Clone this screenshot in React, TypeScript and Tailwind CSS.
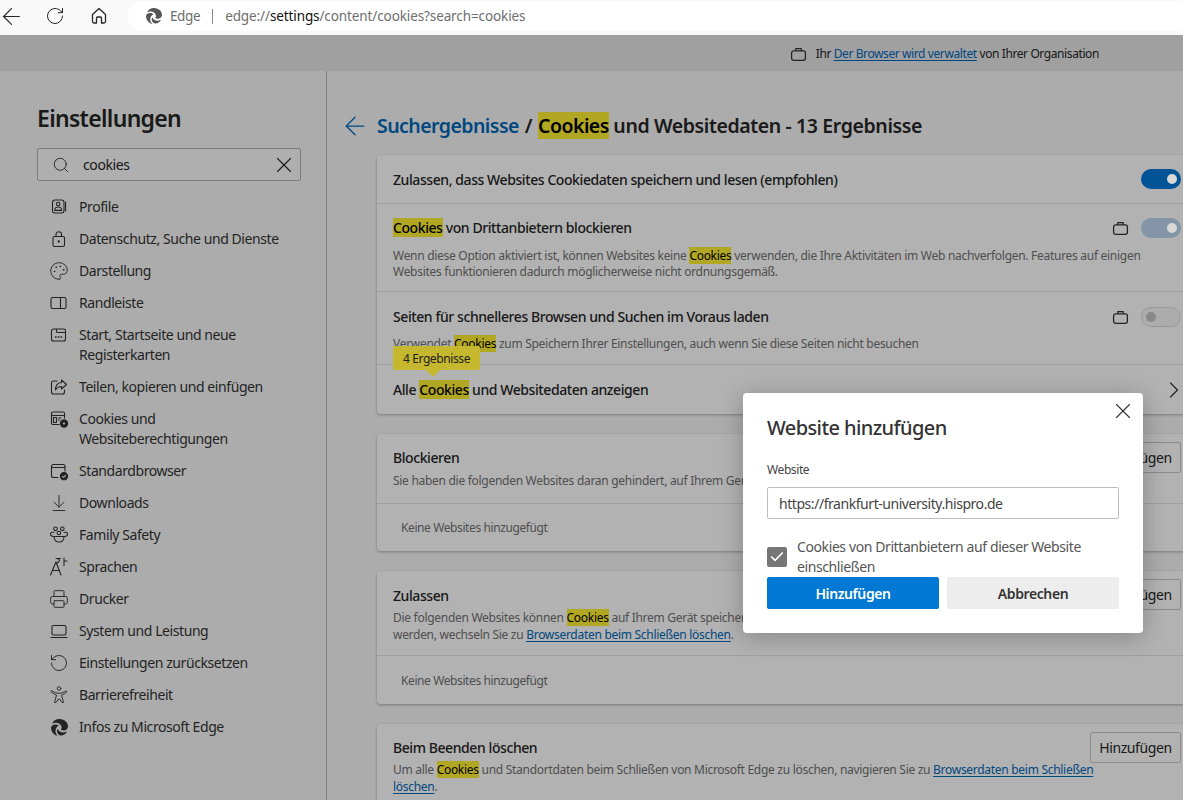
import React from "react";
import { ArrowLeft, RotateCw, Search, X, ChevronRight, Check, Palette, Printer, RotateCcw, ArrowDownToLine } from "lucide-react";
import { FaEdge } from "react-icons/fa6";

const S = ({ children, className = "" }: { children: React.ReactNode; className?: string }) => (
  <svg viewBox="0 0 20 20" fill="none" stroke="currentColor" strokeWidth="1.1" strokeLinecap="round" strokeLinejoin="round" className={className || "w-5 h-5 shrink-0"}>
    {children}
  </svg>
);

const Brief = () => (
  <svg viewBox="0 0 16 16" fill="none" stroke="#333" strokeWidth="1.2" className="w-[17px] h-[17px] shrink-0">
    <rect x="1.5" y="4.5" width="13" height="9" rx="2" />
    <path d="M5.5 4.500v-2h5v2" />
  </svg>
);

const ProfileIcon = () => (
  <S>
    <rect x="3.500" y="3" width="11.500" height="13" rx="2.500" />
    <path d="M16.600 5v9" />
    <circle cx="9.200" cy="7" r="1.800" />
    <path d="M5.800 13c0-2 1.500-3 3.400-3s3.400 1 3.400 3v.4H5.800z" />
  </S>
);
const LockIcon = () => (
  <S>
    <rect x="4" y="7.500" width="11.500" height="10" rx="1.500" />
    <path d="M7 7.500V5.500a2.750 2.750 0 0 1 5.500 0v2" />
    <circle cx="9.750" cy="12.500" r=".6" fill="currentColor" />
  </S>
);
const PanelIcon = () => (
  <S>
    <rect x="2" y="4.500" width="15" height="11" rx="1.500" />
    <path d="M11.500 4.500v11" />
  </S>
);
const StartIcon = () => (
  <S>
    <path d="M4.500 4h3v2.500a1 1 0 0 0 1 1h8v6.500a2 2 0 0 1-2 2H4.500a2 2 0 0 1-2-2V6a2 2 0 0 1 2-2zM8 4h7a1.500 1.500 0 0 1 1.500 1.500v2" />
    <path d="M6.500 12h.6M9.300 12h.6M12.100 12h.6" strokeWidth="1.500" />
  </S>
);
const ShareIcon = () => (
  <S>
    <path d="M8 4H4.500a2 2 0 0 0-2 2v9a2 2 0 0 0 2 2h9a2 2 0 0 0 2-2v-2" />
    <path d="M12.500 3l5 4.500-5 4.500V9.500c-3 0-4.800 1.300-6 3.500 0-4 2-7.200 6-7.500z" />
  </S>
);
const CookieIcon = () => (
  <S>
    <path d="M10 15.500H4a1.500 1.500 0 0 1-1.500-1.500V4.500A1.500 1.500 0 0 1 4 3h10a1.500 1.500 0 0 1 1.500 1.500V9" />
    <path d="M2.500 6.500h13" />
    <rect x="4.500" y="8.500" width="3" height="5" />
    <path d="M9.500 9h2.500M9.500 11h1" />
    <circle cx="15" cy="14.500" r="3.600" fill="#333" stroke="#333" />
    <circle cx="15" cy="14.500" r="1.100" fill="#f7f7f7" stroke="none" />
  </S>
);
const BrowserIcon = () => (
  <S>
    <path d="M9 16.500H4.500a2 2 0 0 1-2-2v-9a2 2 0 0 1 2-2h9.500a2 2 0 0 1 2 2V10" />
    <path d="M2.500 6.500h13.500" />
    <circle cx="15" cy="15.200" r="3.600" fill="#333" stroke="#333" />
    <path d="M13.500 15.300l1.100 1.100 2-2.100" stroke="#f7f7f7" />
  </S>
);
const FamilyIcon = () => (
  <S>
    <circle cx="6.500" cy="3.800" r="1.800" />
    <circle cx="13.300" cy="3.800" r="1.800" />
    <circle cx="9.900" cy="8" r="1.800" />
    <path d="M5 7.300H3.500C2.200 7.300 1.500 8 1.500 9c0 1.500 1.200 2.500 3 2.500M15 7.300h1.500c1.300 0 2 .7 2 1.700 0 1.500-1.200 2.500-3 2.500" />
    <path d="M5 11.500h10c0 3.500-2 5.500-5 5.500s-5-2-5-5.500z" />
  </S>
);
const LangIcon = () => (
  <S>
    <path d="M1.500 18L7 5l5 13M3.400 13.500h7.200" />
    <path d="M7 1.500h4.500M8 1.500c1 .2 2.300.5 2.300 2 0 1.200-1 2-2.300 2.500M15 1v7.500M15 4h3" />
  </S>
);
const LaptopIcon = () => (
  <S>
    <rect x="3" y="4.500" width="14" height="9.500" rx="1.500" />
    <path d="M2 16.500h16" />
  </S>
);
const AccessIcon = () => (
  <S className="w-5 h-5 shrink-0 [stroke-width:0.9]">
    <circle cx="10" cy="3.500" r="1.800" />
    <path d="M3 5.800c2 1.500 4.500 2.500 7 2.500s5-1 7-2.500l.8 1.200c-1.800 1.500-3.500 2.500-5.300 3l2 7.500h-1.500L10.500 14h-1l-2.500 3.500H5.500l2-7.500C5.700 9.500 4 8.500 2.200 7z" />
  </S>
);
const HomeIcon = () => (
  <svg viewBox="0 0 20 20" fill="none" stroke="#262626" strokeWidth="1.300" strokeLinejoin="round" className="w-5 h-5">
    <path d="M3.500 8.500L10 2.500l6.500 6v7a1.500 1.500 0 0 1-1.500 1.500h-2.500v-5a1 1 0 0 0-1-1h-3a1 1 0 0 0-1 1v5H5a1.500 1.500 0 0 1-1.500-1.500z" />
  </svg>
);

const ic = "w-5 h-5 shrink-0";
const nav: { icon: React.ReactNode; label: React.ReactNode; tall?: boolean }[] = [
  { icon: <ProfileIcon />, label: "Profile" },
  { icon: <LockIcon />, label: "Datenschutz, Suche und Dienste" },
  { icon: <Palette className={ic} strokeWidth={1.100} />, label: "Darstellung" },
  { icon: <PanelIcon />, label: "Randleiste" },
  { icon: <StartIcon />, label: <>Start, Startseite und neue<br />Registerkarten</>, tall: true },
  { icon: <ShareIcon />, label: "Teilen, kopieren und einfügen" },
  { icon: <CookieIcon />, label: <>Cookies und<br />Websiteberechtigungen</>, tall: true },
  { icon: <BrowserIcon />, label: "Standardbrowser" },
  { icon: <ArrowDownToLine className={ic} strokeWidth={1.100} />, label: "Downloads" },
  { icon: <FamilyIcon />, label: "Family Safety" },
  { icon: <LangIcon />, label: "Sprachen" },
  { icon: <Printer className={ic} strokeWidth={1.100} />, label: "Drucker" },
  { icon: <LaptopIcon />, label: "System und Leistung" },
  { icon: <RotateCcw className={ic} strokeWidth={1.100} />, label: "Einstellungen zurücksetzen" },
  { icon: <AccessIcon />, label: "Barrierefreiheit" },
  { icon: <FaEdge className="w-[17px] h-[17px] mx-[1.500px] shrink-0" />, label: "Infos zu Microsoft Edge" },
];

const Hl = ({ children = "Cookies" }: { children?: React.ReactNode }) => <span className="bg-[#ffef31] text-black">{children}</span>;
const Lk = ({ children }: { children: React.ReactNode }) => <span className="text-[#0067b8] underline underline-offset-2">{children}</span>;

const Toggle = ({ mode }: { mode: "on" | "soft" | "off" }) => (
  mode === "off" ? (
    <div className="w-10 h-5 rounded-full border border-[#dcdcdc] bg-[#f7f7f7] flex items-center pl-[4px] shrink-0">
      <div className="w-[10px] h-[10px] rounded-full bg-[#c4c4c4]" />
    </div>
  ) : (
    <div className={`w-10 h-5 rounded-full flex items-center justify-end pr-[4px] shrink-0 ${mode === "on" ? "bg-[#0078d4]" : "bg-[#bcd6ee]"}`}>
      <div className="relative z-10 w-[10px] h-[10px] rounded-full bg-[#d8d8d8]" />
    </div>
  )
);

const Btn = () => (
  <div className="w-[91px] h-[31px] border border-[#c8c8c8] rounded-[2px] flex items-center justify-center text-[#262626] shrink-0 text-[14px]">Hinzufügen</div>
);

const Empty = ({ tall }: { tall?: boolean }) => (
  <div className={`flex items-center pl-6 text-[12px] text-[#717171] border-t border-[#e5e5e5] ${tall ? "h-[49px] pt-[2px]" : "h-[48px]"}`}>Keine Websites hinzugefügt</div>
);

const card = "bg-white rounded shadow-[0_1px_3px_rgba(0,0,0,0.3)]";
const desc = "text-[12px] text-[#717171] tracking-[-0.024em]";
const strong = "text-[14px] font-medium tracking-[-0.03em]";

export default function App() {
  return (
    <div className="relative w-[1183px] h-[800px] overflow-hidden bg-[#f7f7f7] flex flex-col font-['Noto_Sans',sans-serif] tracking-[-0.025em] text-[#262626]">
      <header className="h-[35px] shrink-0 bg-[#f9f9f9] flex items-start z-10">
        <div className="w-[127px] h-[32px] flex items-center shrink-0 text-[#262626]">
          <ArrowLeft className="w-[27px] h-[27px] -ml-[2px]" strokeWidth={1} />
          <RotateCw className="w-[20px] h-[20px] ml-[20px]" strokeWidth={1.200} />
          <div className="ml-[24px]"><HomeIcon /></div>
        </div>
        <div className="mt-px h-[30px] flex-1 bg-white rounded-l-full flex items-center pl-[19px] text-[13.500px] text-[#6e6e6e]">
          <FaEdge className="w-[16px] h-[16px] text-[#555]" />
          <span className="ml-2">Edge</span>
          <span className="ml-3 h-[15px] w-px bg-[#8a8a8a]" />
          <span className="ml-3 tracking-[-0.008em]">edge://<span className="text-[#111]">settings</span>/content/cookies?search=cookies</span>
        </div>
      </header>

      <div className="h-9 shrink-0 bg-[#e5e5e5] flex items-center justify-end pr-[84px] pt-[2px] text-[12px] text-[#262626]">
        <Brief />
        <span className="ml-[9px]">Ihr <Lk>Der Browser wird verwaltet</Lk> von Ihrer Organisation</span>
      </div>

      <div className="flex-1 flex min-h-0">
        <aside className="w-[327px] shrink-0 border-r border-[#b5b5b5] bg-[#f7f7f7] pl-[37px] pt-[32px]">
          <h1 className="text-[23px] leading-[30px] font-semibold tracking-[-0.03em]">Einstellungen</h1>
          <div className="mt-[15px] w-[264px] h-[33px] border border-[#b0b0b0] rounded-[2px] bg-[#fbfbfb] flex items-center pl-[14px] pr-[3px] text-[14px]">
            <Search className="w-[18px] h-[18px] text-[#333]" strokeWidth={1.200} />
            <span className="ml-[13px] flex-1">cookies</span>
            <X className="w-[26px] h-[26px]" strokeWidth={1} />
          </div>
          <nav className="mt-[10px] -ml-[37px] pl-[49px] text-[14px] leading-5 text-[#333] tracking-[-0.03em]">
            {nav.map((n, i) => (
              <div key={i} className={`flex gap-[10px] ${n.tall ? "h-[52px] pt-[6px]" : "h-8 items-center"}`}>
                {n.icon}
                <span>{n.label}</span>
              </div>
            ))}
          </nav>
        </aside>

        <main className="flex-1 min-w-0 pl-[19px] pt-[39px]">
          <div className="h-[32px] flex items-center whitespace-nowrap text-[19.500px] font-semibold text-[#262626] tracking-[-0.028em]">
            <ArrowLeft className="w-[30px] h-[30px] -ml-[6px] text-[#0067b8]" strokeWidth={1} />
            <span className="ml-[7px] text-[#0067b8]">Suchergebnisse</span>
            <span className="ml-[6px]">/</span>
            <span className="ml-[6px]"><Hl /> <span className="tracking-[-0.02em]">und Websitedaten - 13 Ergebnisse</span></span>
          </div>

          <div className="mt-[13px] ml-[31px] w-[820px] flex flex-col gap-5 whitespace-nowrap">
            <section className={`relative ${card}`}>
              <div className={`h-[49px] flex items-center justify-between px-4 border-b border-[#e5e5e5] ${strong}`}>
                <span>Zulassen, dass Websites Cookiedaten speichern und lesen (empfohlen)</span>
                <Toggle mode="on" />
              </div>
              <div className="h-[88px] px-4 border-b border-[#e5e5e5]">
                <div className="flex justify-between pt-[14px] items-center">
                  <span className={`${strong} leading-5`}><Hl /> von Drittanbietern blockieren</span>
                  <div className="flex items-center gap-3"><Brief /><Toggle mode="soft" /></div>
                </div>
                <p className={`mt-[10px] leading-[16px] ${desc}`}>Wenn diese Option aktiviert ist, können Websites keine <Hl /> verwenden, die Ihre Aktivitäten im Web nachverfolgen. Features auf einigen<br />Websites funktionieren dadurch möglicherweise nicht ordnungsgemäß.</p>
              </div>
              <div className="h-[73px] px-4 border-b border-[#e5e5e5]">
                <div className="flex justify-between pt-[15px] items-center">
                  <span className={`${strong} leading-5`}>Seiten für schnelleres Browsen und Suchen im Voraus laden</span>
                  <div className="flex items-center gap-3"><Brief /><Toggle mode="off" /></div>
                </div>
                <p className={`mt-[9px] leading-[16px] ${desc}`}>Verwendet <Hl /> zum Speichern Ihrer Einstellungen, auch wenn Sie diese Seiten nicht besuchen</p>
              </div>
              <div className={`h-[49px] flex items-center justify-between px-4 ${strong}`}>
                <span>Alle <Hl /> und Websitedaten anzeigen</span>
                <ChevronRight className="w-[28px] h-[28px] -mr-[7px] text-[#333]" strokeWidth={1} />
              </div>
              <div className="absolute z-10 left-4 top-[191px] h-[24px] w-[87px] pt-px rounded-[2px] bg-[#c5b72e] flex items-center justify-center text-[12px] text-[#222] font-normal">
                4 Ergebnisse
                <div className="absolute top-full left-[33px] border-x-[7px] border-x-transparent border-t-[7px] border-t-[#c5b72e]" />
              </div>
            </section>

            <section className={card}>
              <div className="h-[69px] px-4 pt-[8px] flex justify-between">
                <div className="pt-[5px] min-w-0 flex-1">
                  <div className={`${strong} leading-[22px]`}>Blockieren</div>
                  <p className={`mt-[3px] leading-[17px] ${desc}`}>Sie haben die folgenden Websites daran gehindert, auf Ihrem Gerät Cookies zu speichern und zu lesen.</p>
                </div>
                <Btn />
              </div>
              <Empty />
            </section>

            <section className={card}>
              <div className="h-[84px] px-4 pt-[8px] flex justify-between">
                <div className="pt-[6px] min-w-0 flex-1">
                  <div className={`${strong} leading-[22px]`}>Zulassen</div>
                  <p className={`mt-[2px] leading-[17px] ${desc}`}>Die folgenden Websites können <Hl /> auf Ihrem Gerät speichern und lesen. Um Cookies beim Schließen zu löschen,<br />werden, wechseln Sie zu <Lk>Browserdaten beim Schließen löschen</Lk>.</p>
                </div>
                <Btn />
              </div>
              <Empty tall />
            </section>

            <section className={card}>
              <div className="h-[84px] px-4 pt-[8px] flex justify-between">
                <div className="pt-[5px] min-w-0 flex-1">
                  <div className={`${strong} leading-[22px]`}>Beim Beenden löschen</div>
                  <p className={`mt-[3px] leading-[16.500px] ${desc}`}>Um alle <Hl /> und Standortdaten beim Schließen von Microsoft Edge zu löschen, navigieren Sie zu <Lk>Browserdaten beim Schließen</Lk><br /><Lk>löschen</Lk>.</p>
                </div>
                <Btn />
              </div>
            </section>
          </div>
        </main>
      </div>

      <div className="absolute inset-x-0 top-[35px] bottom-0 bg-black/30" />

      <div className="absolute z-20 left-[743px] top-[393px] w-[400px] h-[240px] bg-white rounded shadow-[0_4px_24px_rgba(0,0,0,0.25)] px-6 pt-[20px] text-[#333]">
        <X className="absolute right-[7px] top-[5px] w-[26px] h-[26px] text-[#333]" strokeWidth={1} />
        <h2 className="text-[20px] leading-[30px] font-medium tracking-[-0.03em]">Website hinzufügen</h2>
        <div className="mt-[19px] text-[12px] leading-[16px] text-[#444]">Website</div>
        <div className="mt-[9px] w-[352px] h-[32px] border border-[#bdbdbd] rounded-[2px] flex items-center px-[11px] text-[14px] text-[#444] tracking-[-0.032em]">https://frankfurt-university.hispro.de</div>
        <div className="mt-[18px] flex gap-[10px] h-[40px] items-start text-[14px] leading-5 text-[#555]">
          <div className="mt-[10px] w-5 h-5 rounded-[2px] bg-[#767676] flex items-center justify-center shrink-0">
            <Check className="w-[16px] h-[16px] text-white" strokeWidth={2.500} />
          </div>
          <span>Cookies von Drittanbietern auf dieser Website<br />einschließen</span>
        </div>
        <div className="flex gap-2 text-[14px] font-semibold">
          <div className="w-[172px] h-8 rounded-[2px] bg-[#0078d4] text-white flex items-center justify-center">Hinzufügen</div>
          <div className="w-[172px] h-8 rounded-[2px] bg-[#ededed] text-[#333] flex items-center justify-center">Abbrechen</div>
        </div>
      </div>
    </div>
  );
}
